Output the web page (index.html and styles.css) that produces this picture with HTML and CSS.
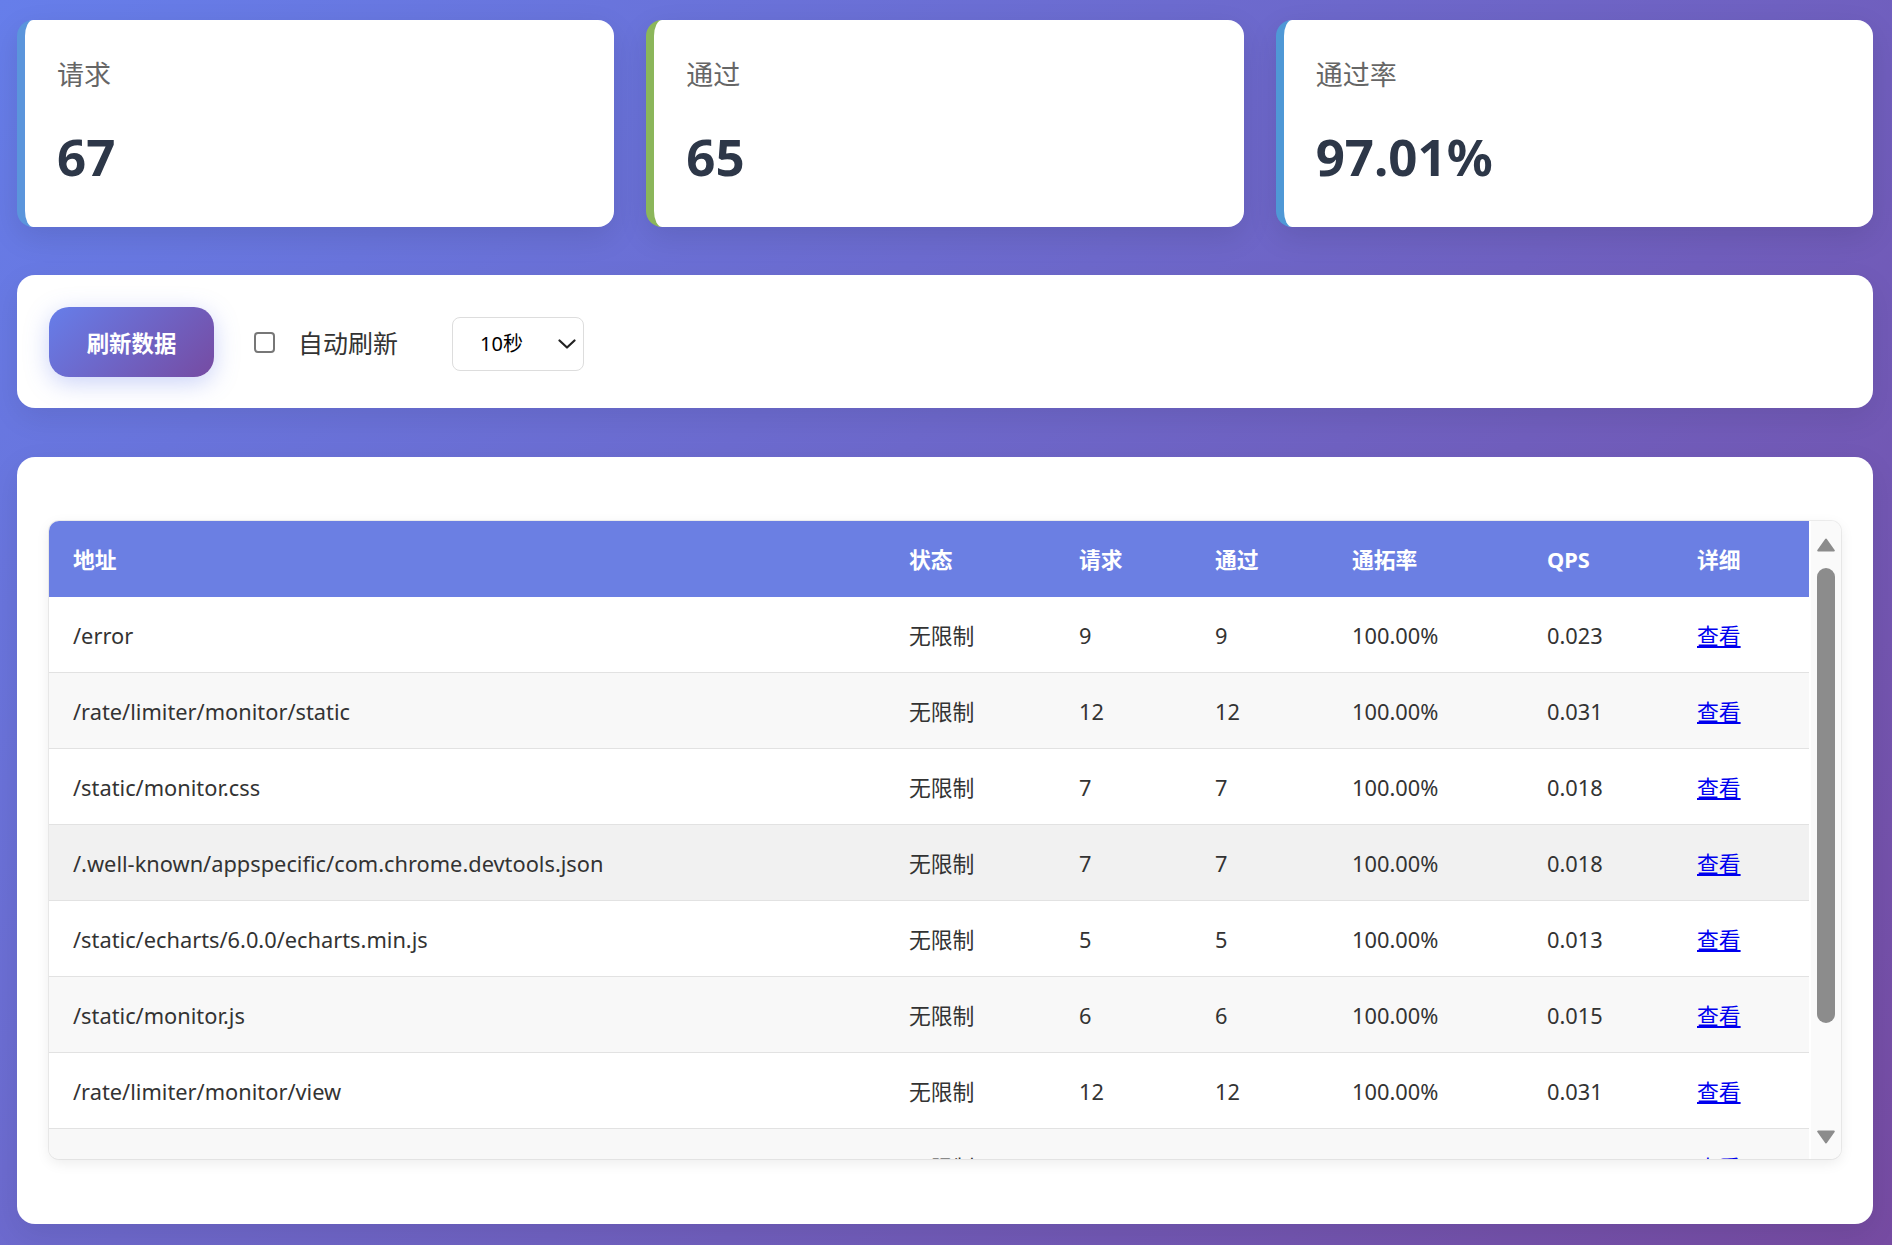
FILE: index.html
```html
<!DOCTYPE html>
<html lang="zh-CN">
<head>
<meta charset="utf-8">
<title>限流监控</title>
<link rel="stylesheet" href="styles.css">
</head>
<body>
<div class="page">
  <section class="stats">
    <div class="stat-card accent-blue">
      <div class="stat-label">请求</div>
      <div class="stat-value">67</div>
    </div>
    <div class="stat-card accent-green">
      <div class="stat-label">通过</div>
      <div class="stat-value">65</div>
    </div>
    <div class="stat-card accent-sky">
      <div class="stat-label">通过率</div>
      <div class="stat-value">97.01%</div>
    </div>
  </section>

  <section class="panel controls">
    <button class="btn-refresh" type="button">刷新数据</button>
    <label class="auto-refresh">
      <input type="checkbox" class="check">
      <span>自动刷新</span>
    </label>
    <select class="interval">
      <option>10秒</option>
      <option>30秒</option>
      <option>60秒</option>
    </select>
  </section>

  <section class="panel table-panel">
    <div class="table-wrap">
      <div class="table-viewport">
        <table class="data-table">
          <colgroup>
            <col class="c-path"><col class="c-status"><col class="c-req"><col class="c-pass"><col class="c-rate"><col class="c-qps"><col class="c-detail">
          </colgroup>
          <thead>
            <tr><th>地址</th><th>状态</th><th>请求</th><th>通过</th><th>通拓率</th><th>QPS</th><th>详细</th></tr>
          </thead>
          <tbody>
            <tr><td>/error</td><td>无限制</td><td>9</td><td>9</td><td>100.00%</td><td>0.023</td><td><a href="#">查看</a></td></tr>
            <tr><td>/rate/limiter/monitor/static</td><td>无限制</td><td>12</td><td>12</td><td>100.00%</td><td>0.031</td><td><a href="#">查看</a></td></tr>
            <tr><td>/static/monitor.css</td><td>无限制</td><td>7</td><td>7</td><td>100.00%</td><td>0.018</td><td><a href="#">查看</a></td></tr>
            <tr class="is-hover"><td>/.well-known/appspecific/com.chrome.devtools.json</td><td>无限制</td><td>7</td><td>7</td><td>100.00%</td><td>0.018</td><td><a href="#">查看</a></td></tr>
            <tr><td>/static/echarts/6.0.0/echarts.min.js</td><td>无限制</td><td>5</td><td>5</td><td>100.00%</td><td>0.013</td><td><a href="#">查看</a></td></tr>
            <tr><td>/static/monitor.js</td><td>无限制</td><td>6</td><td>6</td><td>100.00%</td><td>0.015</td><td><a href="#">查看</a></td></tr>
            <tr><td>/rate/limiter/monitor/view</td><td>无限制</td><td>12</td><td>12</td><td>100.00%</td><td>0.031</td><td><a href="#">查看</a></td></tr>
            <tr><td>/favicon.ico</td><td>无限制</td><td>5</td><td>5</td><td>100.00%</td><td>0.013</td><td><a href="#">查看</a></td></tr>
            <tr><td>/api/limited</td><td>限流</td><td>4</td><td>2</td><td>50.00%</td><td>0.010</td><td><a href="#">查看</a></td></tr>
          </tbody>
        </table>
      </div>
      <div class="scrollbar" aria-hidden="true">
        <div class="sb-btn sb-up">
          <svg width="18" height="14" viewBox="0 0 18 14"><path d="M9 1.5 L16.8 12.5 L1.2 12.5 Z" fill="#8c8c8c" stroke="#8c8c8c" stroke-width="2" stroke-linejoin="round"/></svg>
        </div>
        <div class="sb-track"><div class="sb-thumb"></div></div>
        <div class="sb-btn sb-down">
          <svg width="18" height="14" viewBox="0 0 18 14"><path d="M1.2 1.5 L16.8 1.5 L9 12.5 Z" fill="#8c8c8c" stroke="#8c8c8c" stroke-width="2" stroke-linejoin="round"/></svg>
        </div>
      </div>
    </div>
  </section>
</div>
</body>
</html>
```

FILE: styles.css
```css
html, body {
  margin: 0;
  padding: 0;
}

body {
  min-height: 100vh;
  background: linear-gradient(135deg, #667eea 0%, #764ba2 100%);
  font-family: "Noto Sans", "Noto Sans CJK SC", sans-serif;
  font-size: 22.4px;
  color: #333;
}

.page {
  padding: 20px 19px 20px 17px;
}

/* ---------- stat cards ---------- */
.stats {
  display: grid;
  grid-template-columns: repeat(3, 1fr);
  gap: 32px;
  margin-bottom: 48px;
}

.stat-card {
  box-sizing: border-box;
  height: 207px;
  background: #fff;
  border-radius: 16px;
  border-left: 8px solid #5a96dc;
  padding: 37px 24px 0 32px;
  box-shadow: 0 10px 30px rgba(0, 0, 0, 0.1);
}

.accent-blue { border-left-color: #5b95dc; }
.accent-green { border-left-color: #8bb65a; }
.accent-sky { border-left-color: #4f98d6; }

.stat-label {
  font-size: 27px;
  line-height: 36px;
  color: #666;
}

.stat-value {
  margin-top: 33px;
  font-size: 51px;
  line-height: 60px;
  font-weight: 700;
  color: #2d3748;
}

/* ---------- panels ---------- */
.panel {
  background: #fff;
  border-radius: 18px;
  box-shadow: 0 10px 30px rgba(0, 0, 0, 0.08);
}

.controls {
  display: flex;
  align-items: center;
  padding: 32px 32px 31px;
  margin-bottom: 49px;
}

.btn-refresh {
  width: 165px;
  height: 70px;
  border: none;
  border-radius: 20px;
  background: linear-gradient(135deg, #667eea 0%, #764ba2 100%);
  color: #fff;
  font-family: "Noto Sans", "Noto Sans CJK SC", sans-serif;
  font-size: 22.4px;
  font-weight: 700;
  box-shadow: 0 6px 24px rgba(102, 126, 234, 0.35);
  padding: 0;
}

.auto-refresh {
  display: flex;
  align-items: center;
  gap: 23px;
  margin-left: 40px;
  font-size: 25px;
  color: #333;
}

.check {
  appearance: none;
  -webkit-appearance: none;
  margin: 0;
  width: 21px;
  height: 21px;
  border: 2px solid #777;
  border-radius: 4px;
  background: #fff;
  box-sizing: border-box;
}

.interval {
  appearance: none;
  -webkit-appearance: none;
  margin-left: 54px;
  margin-top: 3px;
  width: 132px;
  height: 54px;
  box-sizing: border-box;
  border: 1px solid #ddd;
  border-radius: 8px;
  padding: 0 0 0 27px;
  background: #fff url("data:image/svg+xml,%3Csvg xmlns='http://www.w3.org/2000/svg' width='18' height='10' viewBox='0 0 18 10'%3E%3Cpath d='M1.5 1.5 L9 8.5 L16.5 1.5' fill='none' stroke='%23222' stroke-width='2.2' stroke-linecap='round' stroke-linejoin='round'/%3E%3C/svg%3E") no-repeat right 7px center;
  font-family: "Noto Sans", "Noto Sans CJK SC", sans-serif;
  font-size: 20px;
  color: #000;
}

/* ---------- table ---------- */
.table-panel {
  padding: 64px 32px 65px;
}

.table-wrap {
  display: flex;
  height: 638px;
  border-radius: 10px;
  overflow: hidden;
  box-shadow: 0 0 0 1px rgba(0, 0, 0, 0.06), 0 4px 14px rgba(0, 0, 0, 0.08);
  background: #fff;
}

.table-viewport {
  flex: 1;
  min-width: 0;
  overflow: hidden;
}

.scrollbar {
  width: 30px;
  flex: none;
  display: flex;
  flex-direction: column;
  align-items: center;
  background: #fafafa;
}

.sb-btn {
  height: 40px;
  flex: none;
  display: flex;
  justify-content: center;
}

.sb-up { align-items: flex-start; padding-top: 17px; box-sizing: border-box; }
.sb-down { align-items: flex-end; padding-bottom: 15px; box-sizing: border-box; }

.sb-track {
  flex: 1;
  display: flex;
  justify-content: center;
}

.sb-thumb {
  width: 18px;
  height: 455px;
  margin-top: 7px;
  border-radius: 9px;
  background: #8c8c8c;
}

.data-table {
  width: 1760px;
  table-layout: fixed;
  border-collapse: collapse;
  font-size: 21.8px;
}

.c-path { width: 836px; }
.c-status { width: 170px; }
.c-req { width: 136px; }
.c-pass { width: 137px; }
.c-rate { width: 195px; }
.c-qps { width: 150px; }
.c-detail { width: 136px; }

.data-table th {
  background: #6b7fe3;
  color: #fff;
  font-weight: 700;
  text-align: left;
  padding: 27px 24px 25px;
  line-height: 24px;
}

.data-table td {
  padding: 27px 24px 24px;
  line-height: 24px;
  border-bottom: 1px solid #e2e2e2;
  white-space: nowrap;
  color: #333;
}

.data-table tbody tr:nth-child(even) td {
  background: #f8f8f8;
}

.data-table tbody tr.is-hover td {
  background: #f1f1f1;
}

.data-table a {
  color: #0000ee;
  text-decoration: underline;
}
```
